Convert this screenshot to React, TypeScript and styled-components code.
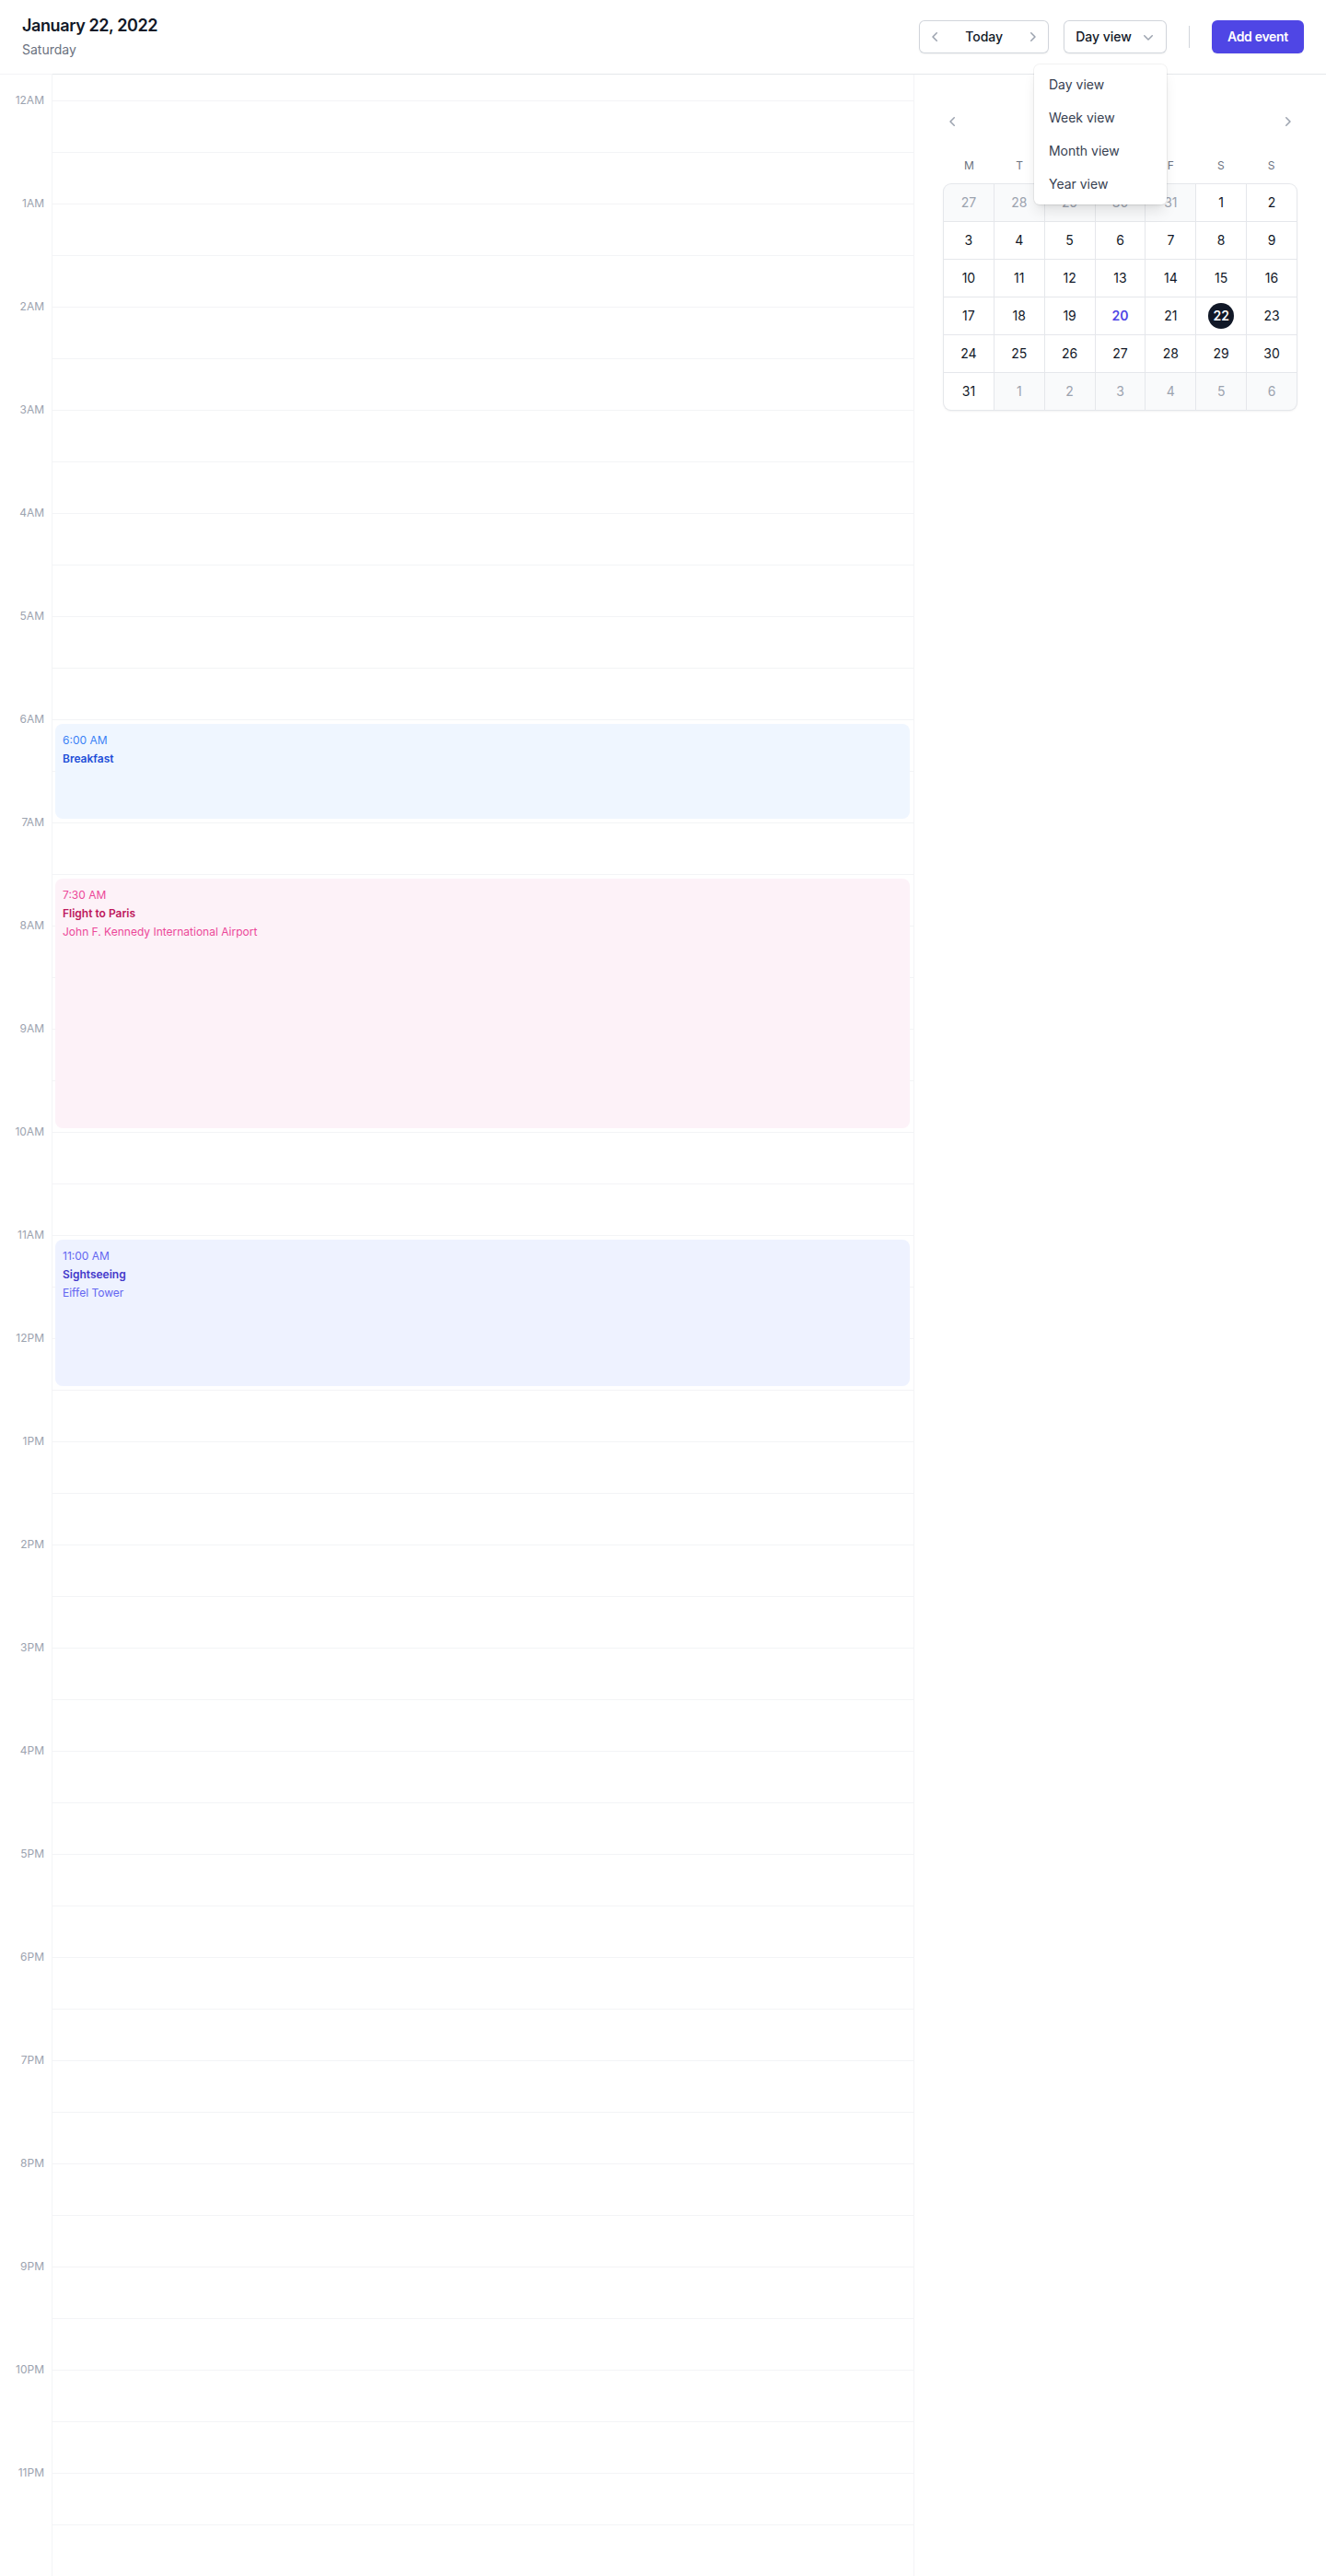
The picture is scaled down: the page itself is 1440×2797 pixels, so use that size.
import React from "react";
import styled, { createGlobalStyle, css } from "styled-components";

const GlobalStyle = createGlobalStyle`
  *, *::before, *::after { box-sizing: border-box; }
  html, body { margin: 0; padding: 0; background: #ffffff; }
  body {
    font-family: Inter, "Noto Sans", "Liberation Sans", sans-serif;
    -webkit-font-smoothing: antialiased;
    color: #111827;
  }
  button { font-family: inherit; }
`;

const Page = styled.div`
  display: flex;
  flex-direction: column;
  min-height: 100vh;
  background: #ffffff;
`;

const Header = styled.header`
  display: flex;
  align-items: center;
  justify-content: space-between;
  padding: 16px 24px;
  border-bottom: 1px solid #e5e7eb;
`;

const Title = styled.h1`
  margin: 0;
  font-size: 18px;
  line-height: 24px;
  font-weight: 600;
  letter-spacing: -0.4px;
  color: #111827;
`;

const Subtitle = styled.p`
  margin: 4px 0 0;
  font-size: 14px;
  line-height: 20px;
  color: #6b7280;
`;

const Controls = styled.div`
  display: flex;
  align-items: center;
`;

const NavGroup = styled.div`
  display: flex;
  align-items: stretch;
  height: 36px;
  border-radius: 6px;
  background: #ffffff;
  box-shadow: inset 0 0 0 1px #d1d5db, 0 1px 2px 0 rgba(0, 0, 0, 0.05);
`;

const NavButton = styled.button`
  display: flex;
  align-items: center;
  justify-content: center;
  width: 36px;
  height: 36px;
  padding: 0;
  border: 0;
  background: transparent;
  color: #9ca3af;
`;

const TodayButton = styled.button`
  padding: 0 14px;
  border: 0;
  background: transparent;
  font-size: 14px;
  line-height: 20px;
  font-weight: 500;
  color: #111827;
`;

const ViewMenu = styled.div`
  position: relative;
  margin-left: 16px;
`;

const ViewButton = styled.button`
  display: flex;
  align-items: center;
  gap: 8px;
  padding: 8px 14px 8px 13px;
  border: 0;
  border-radius: 6px;
  background: #ffffff;
  box-shadow: inset 0 0 0 1px #d1d5db, 0 1px 2px 0 rgba(0, 0, 0, 0.05);
  font-size: 14px;
  line-height: 20px;
  font-weight: 500;
  color: #111827;

  svg {
    margin-right: -4px;
    color: #9ca3af;
  }
`;

const Dropdown = styled.div`
  position: absolute;
  right: 0;
  top: 100%;
  margin-top: 12px;
  width: 144px;
  padding: 4px 0;
  border-radius: 6px;
  background: #ffffff;
  z-index: 20;
  box-shadow: 0 0 0 1px rgba(0, 0, 0, 0.05), 0 10px 15px -3px rgba(0, 0, 0, 0.1),
    0 4px 6px -4px rgba(0, 0, 0, 0.1);
`;

const DropdownItem = styled.a`
  display: block;
  padding: 8px 16px;
  font-size: 14px;
  line-height: 20px;
  color: #374151;
  text-decoration: none;
`;

const Divider = styled.div`
  margin-left: 24px;
  width: 1px;
  height: 24px;
  background: #d1d5db;
`;

const AddButton = styled.button`
  margin-left: 24px;
  padding: 8px 17px;
  border: 0;
  border-radius: 6px;
  background: #4f46e5;
  color: #ffffff;
  font-size: 14px;
  line-height: 20px;
  font-weight: 600;
  letter-spacing: -0.3px;
  box-shadow: 0 1px 2px 0 rgba(0, 0, 0, 0.05);
`;

const Body = styled.div`
  display: flex;
  flex: 1 1 auto;
  background: #ffffff;
`;

const Schedule = styled.div`
  display: flex;
  flex: 1 1 auto;
`;

const TimeColumn = styled.div`
  position: relative;
  z-index: 1;
  flex: none;
  width: 56px;
  padding-top: 18px;
  background: #ffffff;
  box-shadow: 0 0 0 1px #f3f4f6;
`;

const HourLabel = styled.div`
  height: 112px;
  padding-right: 8px;
  text-align: right;
  font-size: 12px;
  line-height: 20px;
  color: #9ca3af;
`;

const DayColumn = styled.div`
  flex: 1 1 auto;
  display: grid;
  grid-template-columns: 1fr;
  grid-template-rows: 1fr;
`;

const Lines = styled.div`
  grid-area: 1 / 1;
  display: grid;
  grid-template-rows: 28px repeat(48, 56px);
`;

const Slot = styled.div<{ $first?: boolean }>`
  border-top: ${(p) => (p.$first ? "0" : "1px solid #f3f4f6")};
`;

const Events = styled.ol`
  grid-area: 1 / 1;
  display: grid;
  grid-template-columns: 1fr;
  grid-template-rows: 28px repeat(288, minmax(0, 1fr)) auto;
  margin: 0;
  padding: 0;
  list-style: none;
`;

type Tone = "blue" | "pink" | "indigo";

const tones: Record<Tone, { bg: string; strong: string; soft: string }> = {
  blue: { bg: "#eff6ff", strong: "#1d4ed8", soft: "#3b82f6" },
  pink: { bg: "#fdf2f8", strong: "#be185d", soft: "#ec4899" },
  indigo: { bg: "#eef2ff", strong: "#4338ca", soft: "#6366f1" },
};

const EventItem = styled.li<{ $row: number; $span: number }>`
  grid-column: 1;
  grid-row: ${(p) => p.$row} / span ${(p) => p.$span};
  display: flex;
  margin-top: 1px;
  min-height: 0;
`;

const EventCard = styled.a<{ $tone: Tone }>`
  flex: 1 1 auto;
  display: flex;
  flex-direction: column;
  margin: 4px;
  padding: 8px;
  border-radius: 8px;
  overflow: hidden;
  text-decoration: none;
  font-size: 12px;
  line-height: 20px;
  background: ${(p) => tones[p.$tone].bg};
`;

const EventTime = styled.p<{ $tone: Tone }>`
  margin: 0;
  color: ${(p) => tones[p.$tone].soft};
`;

const EventTitle = styled.p<{ $tone: Tone }>`
  margin: 0;
  font-weight: 600;
  color: ${(p) => tones[p.$tone].strong};
`;

const EventPlace = styled.p<{ $tone: Tone }>`
  margin: 0;
  color: ${(p) => tones[p.$tone].soft};
`;

const Side = styled.aside`
  flex: none;
  width: 448px;
  padding: 41px 32px;
  border-left: 1px solid #f3f4f6;
`;

const MonthNav = styled.div`
  display: flex;
  align-items: center;
  text-align: center;
  color: #111827;
`;

const MonthArrow = styled.button`
  display: flex;
  flex: none;
  align-items: center;
  justify-content: center;
  margin: -6px;
  padding: 6px;
  border: 0;
  background: transparent;
  color: #9ca3af;
`;

const MonthTitle = styled.div`
  flex: 1 1 auto;
  font-size: 14px;
  line-height: 20px;
  font-weight: 600;
`;

const WeekDays = styled.div`
  display: grid;
  grid-template-columns: repeat(7, 1fr);
  margin-top: 26px;
  text-align: center;
  font-size: 12px;
  line-height: 24px;
  color: #6b7280;
`;

const DaysGrid = styled.div`
  isolation: isolate;
  display: grid;
  grid-template-columns: repeat(7, 1fr);
  gap: 1px;
  margin-top: 8px;
  border-radius: 8px;
  background: #e5e7eb;
  font-size: 14px;
  box-shadow: 0 0 0 1px #e5e7eb, 0 1px 3px 0 rgba(0, 0, 0, 0.1),
    0 1px 2px -1px rgba(0, 0, 0, 0.1);
`;

type Corner = "tl" | "tr" | "bl" | "br" | undefined;

const cornerCss = {
  tl: css`border-top-left-radius: 8px;`,
  tr: css`border-top-right-radius: 8px;`,
  bl: css`border-bottom-left-radius: 8px;`,
  br: css`border-bottom-right-radius: 8px;`,
};

const DayCell = styled.button<{ $outside: boolean; $corner: Corner }>`
  padding: 6px 0;
  border: 0;
  font-size: 14px;
  background: ${(p) => (p.$outside ? "#f9fafb" : "#ffffff")};
  color: ${(p) => (p.$outside ? "#9ca3af" : "#111827")};
  ${(p) => (p.$corner ? cornerCss[p.$corner] : "")}
`;

const DayNum = styled.time<{ $selected?: boolean; $today?: boolean }>`
  display: flex;
  align-items: center;
  justify-content: center;
  width: 28px;
  height: 28px;
  margin: 0 auto;
  border-radius: 9999px;
  line-height: 20px;
  ${(p) =>
    p.$selected &&
    css`
      background: #111827;
      color: #ffffff;
      font-weight: 600;
    `}
  ${(p) =>
    p.$today &&
    css`
      color: #4f46e5;
      font-weight: 600;
    `}
`;

const ChevronLeft = () => (
  <svg width="20" height="20" viewBox="0 0 20 20" fill="currentColor" aria-hidden="true">
    <path
      fillRule="evenodd"
      d="M11.78 5.22a.75.75 0 0 1 0 1.06L8.06 10l3.72 3.72a.75.75 0 1 1-1.06 1.06l-4.25-4.25a.75.75 0 0 1 0-1.06l4.25-4.25a.75.75 0 0 1 1.06 0Z"
      clipRule="evenodd"
    />
  </svg>
);

const ChevronRight = () => (
  <svg width="20" height="20" viewBox="0 0 20 20" fill="currentColor" aria-hidden="true">
    <path
      fillRule="evenodd"
      d="M8.22 5.22a.75.75 0 0 1 1.06 0l4.25 4.25a.75.75 0 0 1 0 1.06l-4.25 4.25a.75.75 0 0 1-1.06-1.06L11.94 10 8.22 6.28a.75.75 0 0 1 0-1.06Z"
      clipRule="evenodd"
    />
  </svg>
);

const ChevronDown = () => (
  <svg width="20" height="20" viewBox="0 0 20 20" fill="currentColor" aria-hidden="true">
    <path
      fillRule="evenodd"
      d="M5.22 8.22a.75.75 0 0 1 1.06 0L10 11.94l3.72-3.72a.75.75 0 1 1 1.06 1.06l-4.25 4.25a.75.75 0 0 1-1.06 0L5.22 9.28a.75.75 0 0 1 0-1.06Z"
      clipRule="evenodd"
    />
  </svg>
);

const hours = [
  "12AM", "1AM", "2AM", "3AM", "4AM", "5AM", "6AM", "7AM", "8AM", "9AM", "10AM", "11AM",
  "12PM", "1PM", "2PM", "3PM", "4PM", "5PM", "6PM", "7PM", "8PM", "9PM", "10PM", "11PM",
];

type CalEvent = { row: number; span: number; tone: Tone; time: string; title: string; place?: string };

const events: CalEvent[] = [
  { row: 74, span: 12, tone: "blue", time: "6:00 AM", title: "Breakfast" },
  { row: 92, span: 30, tone: "pink", time: "7:30 AM", title: "Flight to Paris", place: "John F. Kennedy International Airport" },
  { row: 134, span: 18, tone: "indigo", time: "11:00 AM", title: "Sightseeing", place: "Eiffel Tower" },
];

type Day = { n: number; outside: boolean; selected?: boolean; today?: boolean };

const days: Day[] = [
  ...[27, 28, 29, 30, 31].map((n) => ({ n, outside: true })),
  ...Array.from({ length: 31 }, (_, i) => ({
    n: i + 1,
    outside: false,
    selected: i + 1 === 22,
    today: i + 1 === 20,
  })),
  ...[1, 2, 3, 4, 5, 6].map((n) => ({ n, outside: true })),
];

const cornerFor = (i: number): Corner =>
  i === 0 ? "tl" : i === 6 ? "tr" : i === 35 ? "bl" : i === 41 ? "br" : undefined;

export default function App() {
  return (
    <Page>
      <GlobalStyle />
      <Header>
        <div>
          <Title>January 22, 2022</Title>
          <Subtitle>Saturday</Subtitle>
        </div>
        <Controls>
          <NavGroup>
            <NavButton aria-label="Previous day">
              <ChevronLeft />
            </NavButton>
            <TodayButton>Today</TodayButton>
            <NavButton aria-label="Next day">
              <ChevronRight />
            </NavButton>
          </NavGroup>
          <ViewMenu>
            <ViewButton>
              Day view
              <ChevronDown />
            </ViewButton>
            <Dropdown>
              <DropdownItem href="#">Day view</DropdownItem>
              <DropdownItem href="#">Week view</DropdownItem>
              <DropdownItem href="#">Month view</DropdownItem>
              <DropdownItem href="#">Year view</DropdownItem>
            </Dropdown>
          </ViewMenu>
          <Divider />
          <AddButton>Add event</AddButton>
        </Controls>
      </Header>
      <Body>
        <Schedule>
          <TimeColumn>
            {hours.map((h) => (
              <HourLabel key={h}>{h}</HourLabel>
            ))}
          </TimeColumn>
          <DayColumn>
            <Lines>
              <Slot $first />
              {Array.from({ length: 48 }, (_, i) => (
                <Slot key={i} />
              ))}
            </Lines>
            <Events>
              {events.map((e) => (
                <EventItem key={e.title} $row={e.row} $span={e.span}>
                  <EventCard href="#" $tone={e.tone}>
                    <EventTime $tone={e.tone}>
                      <time>{e.time}</time>
                    </EventTime>
                    <EventTitle $tone={e.tone}>{e.title}</EventTitle>
                    {e.place && <EventPlace $tone={e.tone}>{e.place}</EventPlace>}
                  </EventCard>
                </EventItem>
              ))}
            </Events>
          </DayColumn>
        </Schedule>
        <Side>
          <MonthNav>
            <MonthArrow aria-label="Previous month">
              <ChevronLeft />
            </MonthArrow>
            <MonthTitle>January 2022</MonthTitle>
            <MonthArrow aria-label="Next month">
              <ChevronRight />
            </MonthArrow>
          </MonthNav>
          <WeekDays>
            {["M", "T", "W", "T", "F", "S", "S"].map((d, i) => (
              <div key={i}>{d}</div>
            ))}
          </WeekDays>
          <DaysGrid>
            {days.map((d, i) => (
              <DayCell key={i} $outside={d.outside} $corner={cornerFor(i)}>
                <DayNum $selected={d.selected} $today={d.today}>
                  {d.n}
                </DayNum>
              </DayCell>
            ))}
          </DaysGrid>
        </Side>
      </Body>
    </Page>
  );
}
